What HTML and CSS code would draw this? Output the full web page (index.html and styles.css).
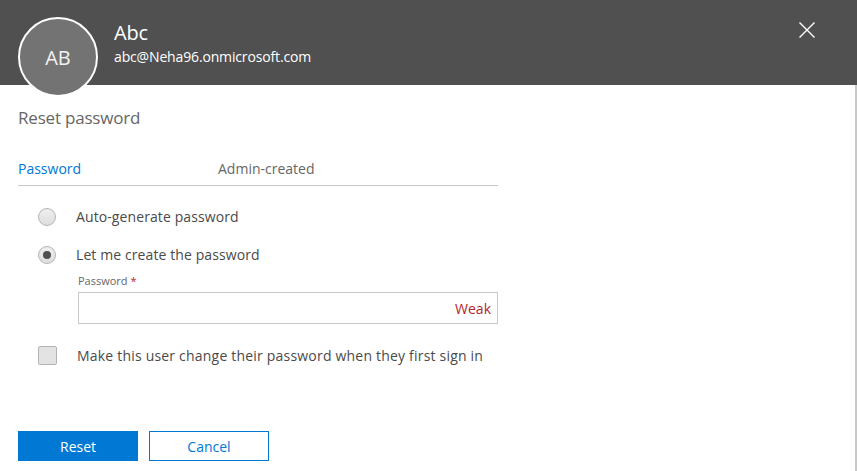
FILE: index.html
```html
<!DOCTYPE html>
<html lang="en">
<head>
<meta charset="utf-8">
<title>Reset password</title>
<link rel="stylesheet" href="styles.css">
</head>
<body>
<div class="panel">
  <header class="header">
    <div class="avatar">AB</div>
    <div class="identity">
      <div class="name">Abc</div>
      <div class="email">abc@Neha96.onmicrosoft.com</div>
    </div>
    <button class="close" aria-label="Close">
      <svg width="16" height="16" viewBox="0 0 16 16"><path d="M0.5 0.5 L15.5 15.5 M15.5 0.5 L0.5 15.5" stroke="#fff" stroke-width="1.4" fill="none"/></svg>
    </button>
  </header>
  <main class="content">
    <h1 class="title">Reset password</h1>
    <div class="tabs">
      <div class="tab active">Password</div>
      <div class="tab">Admin-created</div>
    </div>
    <div class="options">
      <label class="option">
        <span class="radio"></span>
        <span class="opt-label">Auto-generate password</span>
      </label>
      <label class="option">
        <span class="radio checked"></span>
        <span class="opt-label">Let me create the password</span>
      </label>
      <div class="field">
        <div class="field-label">Password <span class="req">*</span></div>
        <div class="input"><span class="strength">Weak</span></div>
      </div>
      <label class="check-row">
        <span class="checkbox"></span>
        <span class="opt-label">Make this user change their password when they first sign in</span>
      </label>
    </div>
    <div class="actions">
      <button class="btn primary">Reset</button>
      <button class="btn secondary">Cancel</button>
    </div>
  </main>
</div>
</body>
</html>
```
FILE: styles.css
```css
* { box-sizing: border-box; }
html, body { margin: 0; padding: 0; background: #fff; }
body {
  font-family: "Open Sans", "Noto Sans", "Liberation Sans", sans-serif;
  color: #333;
  width: 857px;
  height: 471px;
  overflow: hidden;
}
.panel {
  height: 471px;
  display: flex;
  flex-direction: column;
}
.header {
  height: 85px;
  flex: none;
  background: #505050;
  display: flex;
  align-items: flex-start;
  padding-left: 18px;
  position: relative;
}
.avatar {
  position: relative;
  z-index: 1;
  margin-top: 17px;
  width: 80px;
  height: 80px;
  border-radius: 50%;
  background: #737373;
  border: 2px solid #fff;
  color: #f4f4f4;
  font-size: 20px;
  display: flex;
  align-items: center;
  justify-content: center;
}
.identity {
  margin-left: 16px;
  margin-top: 19px;
  color: #fff;
}
.name {
  font-size: 20px;
  line-height: 28px;
  letter-spacing: -0.2px;
}
.email {
  font-size: 14px;
  line-height: 20px;
  letter-spacing: -0.15px;
}
.close {
  margin-left: auto;
  margin-right: 42px;
  margin-top: 22px;
  width: 16px;
  height: 16px;
  padding: 0;
  border: 0;
  background: none;
  display: block;
}
.close svg { display: block; }
.content {
  flex: 1;
  padding-left: 18px;
  border-right: 2px solid #c8c8c8;
}
.title {
  margin: 0;
  padding-top: 21px;
  font-size: 17px;
  font-weight: 400;
  line-height: 24px;
  color: #666;
  letter-spacing: -0.2px;
}
.tabs {
  margin-top: 24px;
  width: 480px;
  display: flex;
  border-bottom: 1px solid #c8c8c8;
  height: 32px;
  padding-top: 5px;
}
.tab {
  width: 200px;
  font-size: 14px;
  line-height: 20px;
  color: #666;
}
.tab.active { color: #0078d4; }
.options {
  padding-left: 20px;
  padding-top: 22px;
}
.option {
  display: flex;
  align-items: center;
  height: 18px;
  margin-bottom: 20px;
}
.radio {
  width: 18px;
  height: 18px;
  border-radius: 50%;
  border: 1px solid #b4b4b4;
  background: linear-gradient(#efefef, #dedede);
  flex: none;
  position: relative;
}
.radio.checked::after {
  content: "";
  position: absolute;
  left: 4px;
  top: 4px;
  width: 8px;
  height: 8px;
  border-radius: 50%;
  background: #505050;
}
.opt-label {
  margin-left: 20px;
  font-size: 14px;
  line-height: 20px;
  color: #4a4a4a;
  letter-spacing: 0.1px;
}
.field {
  margin-left: 40px;
  margin-top: -11px;
  width: 420px;
}
.field-label {
  font-size: 11px;
  line-height: 16px;
  color: #666;
}
.req { color: #b3262e; }
.input {
  margin-top: 3px;
  height: 32px;
  border: 1px solid #c8c8c8;
  display: flex;
  align-items: center;
  justify-content: flex-end;
  padding-right: 6px;
}
.strength {
  color: #b3262e;
  font-size: 14px;
}
.check-row {
  display: flex;
  align-items: center;
  margin-top: 22px;
  height: 19px;
}
.checkbox {
  width: 19px;
  height: 19px;
  border: 1px solid #b4b4b4;
  border-radius: 2px;
  background: #e3e3e3;
  flex: none;
}
.check-row .opt-label { margin-left: 20px; letter-spacing: 0.2px; }
.actions {
  margin-top: 66px;
  display: flex;
  gap: 11px;
}
.btn {
  width: 120px;
  height: 30px;
  font-family: inherit;
  font-size: 14px;
  padding: 0;
  border-radius: 0;
}
.btn.primary {
  background: #0078d4;
  color: #fff;
  border: 1px solid #0078d4;
}
.btn.secondary {
  background: #fff;
  color: #0078d4;
  border: 1px solid #0078d4;
}
```
